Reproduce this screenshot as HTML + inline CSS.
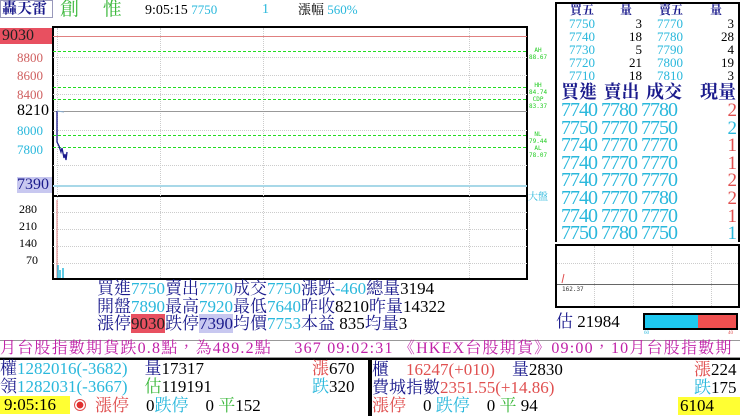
<!DOCTYPE html>
<html><head><meta charset="utf-8"><style>
*{margin:0;padding:0;box-sizing:border-box}
body{width:740px;height:416px;background:#fff;position:relative;overflow:hidden;font-family:"Liberation Serif","Noto Serif CJK TC","Noto Serif CJK SC",serif;}
.a{position:absolute;white-space:nowrap;line-height:1}
.nv{color:#1a1a8c}.cy{color:#2ab8dc}.rd{color:#e05050}.bk{color:#000}.gr{color:#3cb83c}.mg{color:#c020a8}
.hl{position:absolute;left:53px;width:474px;height:0}
.gd{position:absolute;left:53px;width:474px;height:1px;background:repeating-linear-gradient(90deg,#22dd22 0 3px,transparent 3px 5px)}
.vl{position:absolute;width:0}
</style></head><body>
<div class="a nv" style="left:0;top:0;width:53px;height:18px;border:1px solid #9999bb;font-size:15px;font-weight:bold;padding:1px 1px">轟天雷</div>
<div class="a gr" style="left:60px;top:0;font-size:19px">創　 惟</div>
<div class="a bk" style="left:145px;top:3px;font-size:14px">9:05:15 <span class="cy" style="font-size:13px">7750</span></div>
<div class="a cy" style="left:262px;top:3px;font-size:14px">1</div>
<div class="a bk" style="left:298px;top:3px;font-size:13px">漲幅 <span class="cy">560%</span></div>

<div style="position:absolute;left:52px;top:26px;width:476px;height:170px;border:2px solid #000;border-bottom:1px solid #000"></div>
<div style="position:absolute;left:52px;top:195px;width:476px;height:85px;border:2px solid #000"></div>
<div class="vl" style="left:57px;top:28px;height:250px;border-left:1px dotted #ccc"></div>
<div class="vl" style="left:160px;top:28px;height:250px;border-left:1px dotted #ccc"></div>
<div class="vl" style="left:263px;top:28px;height:250px;border-left:1px dotted #ccc"></div>
<div class="vl" style="left:469px;top:28px;height:250px;border-left:1px dotted #ccc"></div>
<div class="hl" style="top:57px;border-top:1px dotted #ccc"></div>
<div class="hl" style="top:75px;border-top:1px dotted #ccc"></div>
<div class="hl" style="top:94px;border-top:1px dotted #ccc"></div>
<div class="hl" style="top:130px;border-top:1px dotted #ccc"></div>
<div class="hl" style="top:165px;border-top:1px dotted #ccc"></div>
<div class="hl" style="top:212px;border-top:1px dotted #ccc"></div>
<div class="hl" style="top:229px;border-top:1px dotted #ccc"></div>
<div class="hl" style="top:246px;border-top:1px dotted #ccc"></div>
<div class="hl" style="top:263px;border-top:1px dotted #ccc"></div>
<div class="hl" style="top:36px;border-top:1px solid #e08080"></div>
<div class="gd" style="top:51px"></div>
<div class="gd" style="top:87px"></div>
<div class="gd" style="top:99px"></div>
<div class="hl" style="top:111px;border-top:1px solid #999"></div>
<div class="gd" style="top:135px"></div>
<div class="gd" style="top:147px"></div>
<div class="hl" style="top:185px;border-top:2px solid #a8d8e8"></div>
<svg style="position:absolute;left:52px;top:100px" width="20" height="180">
<path d="M5 11 L5 42 L7 46 L9 52 L10 48 L12 58 L13 54 L14 60 L15 52" stroke="#1a1a8c" fill="none" stroke-width="1.3"/>
<path d="M5 11 L12 12" stroke="#8ac" fill="none"/>
<path d="M5 100 L5 178" stroke="#e08080"/>
<path d="M6 165 L6 178 M8 170 L8 178 M11 168 L11 178" stroke="#2ab8dc" stroke-width="1.5"/>
</svg>
<div class="a" style="left:0;top:28px;width:52px;height:16px;background:#e85060;color:#222;font-size:16px;padding-left:2px">9030</div>
<div class="a" style="left:17px;top:51px;font-size:13px;color:#d06060">8800</div>
<div class="a" style="left:17px;top:69px;font-size:13px;color:#d06060">8600</div>
<div class="a" style="left:17px;top:88px;font-size:13px;color:#d06060">8400</div>
<div class="a bk" style="left:17px;top:103px;font-size:16px">8210</div>
<div class="a cy" style="left:17px;top:124px;font-size:13px">8000</div>
<div class="a cy" style="left:17px;top:143px;font-size:13px">7800</div>
<div class="a" style="left:17px;top:177px;width:35px;height:16px;background:#c8c8f0;color:#1a1a8c;font-size:16px">7390</div>
<div class="a bk" style="left:19px;top:203px;font-size:12px">280</div>
<div class="a bk" style="left:19px;top:220px;font-size:12px">210</div>
<div class="a bk" style="left:19px;top:237px;font-size:12px">140</div>
<div class="a bk" style="left:26px;top:254px;font-size:12px">70</div>
<div class="a" style="left:529px;top:47px;font-size:6px;line-height:7px;font-family:'DejaVu Sans Mono',monospace;text-align:center;color:#2c2">AH<br>88.67</div>
<div class="a" style="left:529px;top:82px;font-size:6px;line-height:7px;font-family:'DejaVu Sans Mono',monospace;text-align:center;color:#2c2">HH<br>84.74<br>CDP<br>83.37</div>
<div class="a" style="left:529px;top:131px;font-size:6px;line-height:7px;font-family:'DejaVu Sans Mono',monospace;text-align:center;color:#2c2">NL<br>79.44<br>AL<br>78.07</div>
<div class="a cy" style="left:528px;top:193px;font-size:10px">大盤</div>

<div class="a nv" style="left:97px;top:280px;font-size:17px;line-height:17.5px">買進<span class="cy">7750</span>賣出<span class="cy">7770</span>成交<span class="cy">7750</span>漲跌<span class="cy">-460</span>總量<span class="bk">3194</span><br>開盤<span class="cy">7890</span>最高<span class="cy">7920</span>最低<span class="cy">7640</span>昨收<span class="bk">8210</span>昨量<span class="bk">14322</span><br>漲停<span style="background:#e85060;color:#222">9030</span>跌停<span style="background:#c8c8f0">7390</span>均價<span class="cy">7753</span>本益 <span class="bk">835</span>均量<span class="bk">3</span></div>

<div style="position:absolute;left:555px;top:2px;width:185px;height:240px;border:2px solid #000;border-bottom:none"></div>
<div class="a nv" style="left:560px;top:4px;width:180px;font-size:12px;line-height:13px">
<div style="display:flex;text-align:center;font-weight:bold"><span style="width:44px">買五</span><span style="width:44px">量</span><span style="width:46px">賣五</span><span style="width:44px">量</span></div>
<div style="display:flex;font-size:13px"><span class="cy" style="width:44px;text-align:center">7750<br>7740<br>7730<br>7720<br>7710</span><span class="bk" style="width:38px;text-align:right">3<br>18<br>5<br>21<br>18</span><span class="cy" style="width:56px;text-align:center">7770<br>7780<br>7790<br>7800<br>7810</span><span class="bk" style="width:36px;text-align:right">3<br>28<br>4<br>19<br>3</span></div></div>
<div class="a nv" style="left:561px;top:83px;font-size:18px;font-weight:bold;word-spacing:2px">買進 賣出 成交　現量</div>
<div class="a" style="left:561px;top:102px;font-size:20px;line-height:17.6px;display:flex">
<div class="cy" style="width:132px;letter-spacing:-1px">7740 7780 7780<br>7750 7770 7750<br>7740 7770 7770<br>7740 7770 7770<br>7740 7770 7770<br>7740 7770 7780<br>7740 7770 7770<br>7750 7780 7750</div>
<div style="width:44px;text-align:right;font-size:19px"><span class="rd">2</span><br><span class="cy">2</span><br><span class="rd">1</span><br><span class="rd">1</span><br><span class="rd">2</span><br><span class="rd">2</span><br><span class="rd">1</span><br><span class="cy">1</span></div></div>
<div style="position:absolute;left:555px;top:244px;width:185px;height:64px;border:2px solid #000"></div>
<div class="vl" style="left:594px;top:246px;height:60px;border-left:1px dotted #ccc"></div>
<div class="vl" style="left:633px;top:246px;height:60px;border-left:1px dotted #ccc"></div>
<div class="vl" style="left:672px;top:246px;height:60px;border-left:1px dotted #ccc"></div>
<div class="vl" style="left:711px;top:246px;height:60px;border-left:1px dotted #ccc"></div>
<div style="position:absolute;left:557px;top:284px;width:181px;border-top:1px solid #666"></div>
<div style="position:absolute;left:557px;top:263px;width:181px;border-top:1px dotted #ccc"></div>
<svg style="position:absolute;left:560px;top:272px" width="8" height="12"><path d="M2 11 L4 2" stroke="#e05050"/></svg>
<div class="a" style="left:562px;top:287px;font-size:6px;font-family:'DejaVu Sans Mono',monospace;color:#333">162.37</div>
<div class="a nv" style="left:556px;top:313px;font-size:17px">估 <span class="bk">21984</span></div>
<div style="position:absolute;left:643px;top:313px;width:95px;height:17px;border:2px solid #000;background:linear-gradient(90deg,#1ec8f0 0 58%,#f05050 58%)"></div>
<div class="a" style="left:644px;top:331px;font-size:5px;color:#2ab8dc">60</div>
<div class="a rd" style="left:728px;top:331px;font-size:5px">40</div>

<div style="position:absolute;left:0;top:340px;width:740px;height:18px;border:1px solid #999;border-left:none;border-right:none"></div>
<div class="a mg" style="left:0;top:341px;font-size:16px;letter-spacing:1.2px">月台股指數期貨跌0.8點，為489.2點　 367 09:02:31 《HKEX台股期貨》09:00，10月台股指數期</div>
<div style="position:absolute;left:0;top:358px;width:370px;height:58px;border-right:2px solid #000;border-top:2px solid #000"></div>
<div style="position:absolute;left:372px;top:358px;width:368px;height:2px;background:#000"></div>
<div style="position:absolute;left:370px;top:358px;width:2px;height:58px;background:#000"></div>
<div class="a" style="left:0;top:360px;font-size:17px;line-height:18px">
<span class="nv">權</span><span class="cy">1282016(-3682)</span>　<span class="nv">量</span>17317<br>
<span class="nv">領</span><span class="cy">1282031(-3667)</span>　<span class="gr">估</span>119191</div>
<div class="a" style="left:312px;top:360px;font-size:17px;line-height:18px;text-align:right"><span class="rd">漲</span>670<br><span class="cy">跌</span>320</div>
<div class="a" style="left:0;top:396px;width:70px;height:18px;background:#ffff33;font-size:17px;padding-left:4px">9:05:16</div>
<div style="position:absolute;left:74px;top:399px;width:12px;height:12px;border-radius:50%;border:1px solid #e05050;background:radial-gradient(#e03030 45%,#fff 50%)"></div>
<div class="a" style="left:95px;top:397px;font-size:17px"><span class="rd">漲停</span>　0<span class="cy">跌停</span>　0 <span class="gr">平</span>152</div>
<div class="a" style="left:372px;top:361px;font-size:17px;line-height:18px"><span class="nv">櫃</span>　<span class="rd">16247(+010)</span>　<span class="nv">量</span>2830<br><span class="nv">費城指數</span><span class="rd">2351.55(+14.86)</span><br><span class="rd">漲停</span>　0 <span class="cy">跌停</span>　0 <span class="gr">平</span> 94</div>
<div class="a" style="left:694px;top:361px;font-size:17px;line-height:18px;text-align:right"><span class="rd">漲</span>224<br><span class="cy">跌</span>175</div>
<div class="a" style="left:678px;top:397px;width:62px;height:18px;background:#ffff33;font-size:17px;padding-left:2px">6104</div>
</body></html>
